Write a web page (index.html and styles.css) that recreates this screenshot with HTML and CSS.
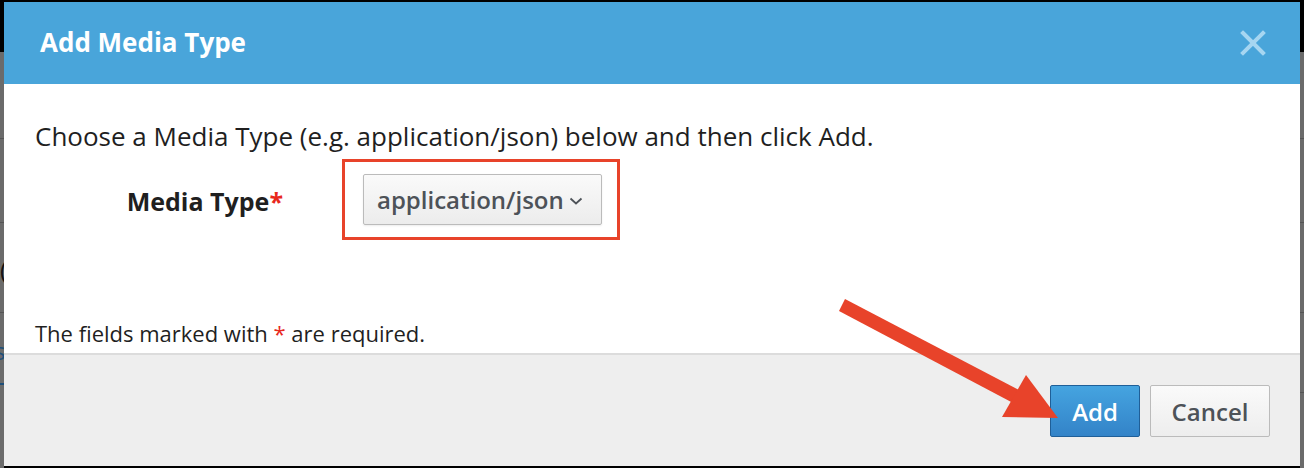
FILE: index.html
```html
<!DOCTYPE html>
<html>
<head>
<meta charset="utf-8">
<link rel="stylesheet" href="styles.css">
</head>
<body>
<div class="backdrop">
  <div class="edge edge-left">
    <span class="bg-line l1"></span><span class="bg-line l2"></span><span class="bg-glyph">(</span><span class="bg-line l3"></span><span class="bg-link">s</span><span class="bg-dash"></span>
  </div>
  <div class="modal">
    <div class="modal-header">
      <h1 class="modal-title">Add Media Type</h1>
      <span class="close" aria-label="Close">
        <svg width="26" height="26" viewBox="0 0 26 26"><path d="M3 3 L23 23 M23 3 L3 23" stroke="#a6d6f1" stroke-width="4" stroke-linecap="square"/></svg>
      </span>
    </div>
    <div class="modal-body">
      <p class="intro">Choose a Media Type (e.g. application/json) below and then click Add.</p>
      <div class="form-row">
        <label class="form-label">Media Type<span class="req">*</span></label>
        <div class="highlight">
          <button class="select">application/json<svg class="chev" width="14" height="8" viewBox="0 0 14 8"><path d="M1.5 1.5 L7 6.5 L12.5 1.5" fill="none" stroke="#4d5258" stroke-width="1.8"/></svg></button>
        </div>
      </div>
      <p class="note">The fields marked with <span class="req">*</span> are required.</p>
    </div>
    <div class="modal-footer">
      <button class="btn btn-primary">Add</button>
      <button class="btn btn-default">Cancel</button>
    </div>
  </div>
  <div class="edge edge-right">
    <span class="bg-line l1"></span><span class="bg-line l2"></span><span class="bg-line l3"></span><span class="bg-line l4"></span>
  </div>
</div>
<svg class="annotation" width="1304" height="468" viewBox="0 0 1304 468">
  <path d="M845 299 L1021 391 L1015 404 L839 311 Z" fill="#e8432a"/>
  <path d="M1026 375 L1058 418 L1002 417 Z" fill="#e8432a"/>
</svg>
</body>
</html>
```

FILE: styles.css
```css
html, body {
  margin: 0;
  padding: 0;
  width: 1304px;
  height: 468px;
  overflow: hidden;
}
body {
  font-family: "Open Sans", "Noto Sans", sans-serif;
  background: #000;
  position: relative;
}
.backdrop {
  display: flex;
  height: 468px;
  padding-top: 2px;
  box-sizing: border-box;
}
.edge {
  width: 4px;
  flex: none;
  position: relative;
  background: linear-gradient(#000 0 50px, #6b6b6b 50px);
  overflow: hidden;
}
.bg-line {
  position: absolute;
  left: 0;
  width: 4px;
  height: 1px;
  background: #555;
}
.l1 { top: 136px; }
.l2 { top: 220px; }
.l3 { top: 310px; }
.l4 { top: 390px; }
.bg-glyph {
  position: absolute;
  left: 0;
  top: 253px;
  font-size: 24px;
  line-height: 30px;
  color: #111;
}
.bg-link {
  position: absolute;
  left: -6px;
  top: 334px;
  font-size: 24px;
  line-height: 30px;
  color: #1d4f7a;
}
.bg-dash {
  position: absolute;
  left: 0;
  top: 381px;
  width: 4px;
  height: 2px;
  background: #1d4f7a;
}
.modal {
  flex: 1;
  height: 464px;
  display: flex;
  flex-direction: column;
  background: #fff;
}
.modal-header {
  height: 82px;
  flex: none;
  background: #49a5da;
  display: flex;
  align-items: center;
  justify-content: space-between;
  padding: 0 34px 0 36px;
}
.modal-title {
  margin: 0;
  color: #fff;
  font-size: 26px;
  font-weight: 700;
  line-height: 32px;
  padding-bottom: 2px;
}
.close {
  display: flex;
  width: 26px;
  height: 26px;
}
.modal-body {
  flex: 1;
  padding: 0 31px;
}
.intro {
  margin: 34px 0 0;
  font-size: 26px;
  line-height: 36px;
  color: #1f1f1f;
}
.form-row {
  display: flex;
  align-items: center;
  margin-top: 5px;
}
.form-label {
  width: 248px;
  text-align: right;
  font-size: 25px;
  font-weight: 700;
  color: #1f1f1f;
  margin-right: 59px;
  padding-top: 2px;
}
.req {
  color: #e8281c;
}
.highlight {
  border: 3px solid #e8432a;
  padding: 12px 15px 12px 18px;
}
.select {
  display: flex;
  align-items: center;
  width: 239px;
  height: 51px;
  box-sizing: border-box;
  padding: 0 13px;
  border: 1px solid #bbb;
  border-radius: 2px;
  background: linear-gradient(#fafafa, #ececec);
  box-shadow: 0 1px 2px rgba(0,0,0,0.08);
  font-family: "Open Sans", "Noto Sans", sans-serif;
  font-size: 24px;
  font-weight: 600;
  color: #4d5258;
}
.chev {
  margin-left: 5px;
  margin-top: 3px;
}
.note {
  margin: 78px 0 0;
  font-size: 22px;
  line-height: 30px;
  color: #1f1f1f;
}
.modal-footer {
  height: 113px;
  flex: none;
  box-sizing: border-box;
  border-top: 2px solid #dcdcdc;
  background: #eeeeee;
  display: flex;
  justify-content: flex-end;
  align-items: flex-start;
  gap: 10px;
  padding: 30px 30px 0 0;
}
.btn {
  height: 52px;
  border-radius: 2px;
  font-family: "Open Sans", "Noto Sans", sans-serif;
  font-size: 24px;
  font-weight: 600;
  padding: 0;
}
.btn-primary {
  width: 90px;
  background: linear-gradient(#45a4e0, #3383c8);
  border: 1px solid #1f5f98;
  color: #fff;
}
.btn-default {
  width: 120px;
  background: linear-gradient(#fafafa, #ededed);
  border: 1px solid #bbb;
  color: #4d5258;
}
.annotation {
  position: absolute;
  left: 0;
  top: 0;
  pointer-events: none;
}
```
